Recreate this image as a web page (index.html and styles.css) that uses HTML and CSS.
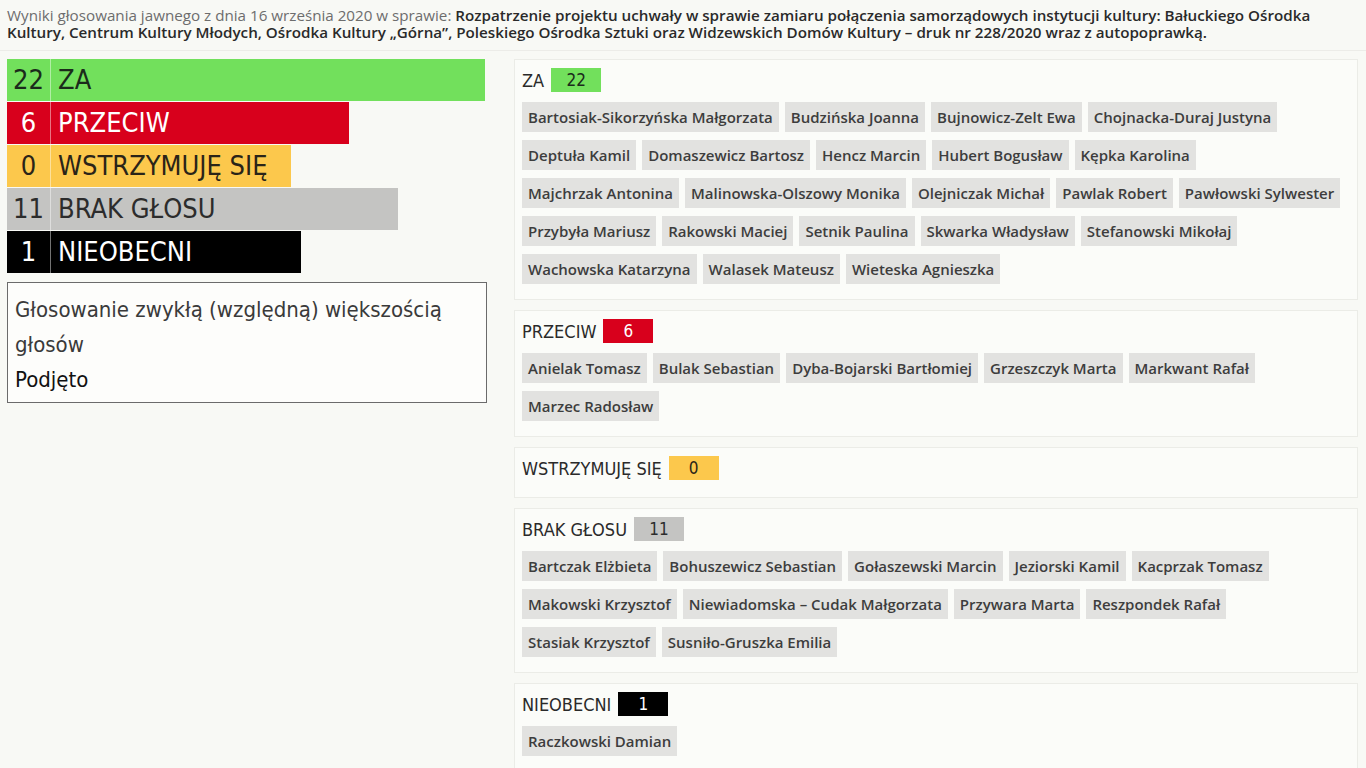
FILE: index.html
```html
<!DOCTYPE html>
<html lang="pl">
<head>
<meta charset="utf-8">
<title>Wyniki głosowania</title>
<link rel="stylesheet" href="styles.css">
</head>
<body>
<header class="top">
  <p class="title"><span class="muted">Wyniki głosowania jawnego z dnia 16 września 2020 w sprawie:</span> <span class="strong">Rozpatrzenie projektu uchwały w sprawie zamiaru połączenia samorządowych instytucji kultury: Bałuckiego Ośrodka Kultury, Centrum Kultury Młodych, Ośrodka Kultury „Górna”, Poleskiego Ośrodka Sztuki oraz Widzewskich Domów Kultury – druk nr 228/2020 wraz z autopoprawką.</span></p>
</header>
<main class="layout">
  <section class="left">
    <div class="bars">
      <div class="bar bar-za" style="width:478px"><span class="num">22</span><span class="lbl">ZA</span></div>
      <div class="bar bar-przeciw" style="width:342px"><span class="num">6</span><span class="lbl">PRZECIW</span></div>
      <div class="bar bar-wstrz" style="width:284px"><span class="num">0</span><span class="lbl">WSTRZYMUJĘ SIĘ</span></div>
      <div class="bar bar-brak" style="width:391px"><span class="num">11</span><span class="lbl">BRAK GŁOSU</span></div>
      <div class="bar bar-nieob" style="width:294px"><span class="num">1</span><span class="lbl">NIEOBECNI</span></div>
    </div>
    <div class="result">
      <p>Głosowanie zwykłą (względną) większością głosów</p>
      <p class="result-strong">Podjęto</p>
    </div>
  </section>
  <section class="right">
    <div class="panel">
      <div class="panel-head"><span class="panel-title">ZA</span><span class="badge badge-za">22</span></div>
      <ul class="chips">
        <li>Bartosiak-Sikorzyńska Małgorzata</li><li>Budzińska Joanna</li><li>Bujnowicz-Zelt Ewa</li><li>Chojnacka-Duraj Justyna</li>
        <li>Deptuła Kamil</li><li>Domaszewicz Bartosz</li><li>Hencz Marcin</li><li>Hubert Bogusław</li><li>Kępka Karolina</li>
        <li>Majchrzak Antonina</li><li>Malinowska-Olszowy Monika</li><li>Olejniczak Michał</li><li>Pawlak Robert</li><li>Pawłowski Sylwester</li>
        <li>Przybyła Mariusz</li><li>Rakowski Maciej</li><li>Setnik Paulina</li><li>Skwarka Władysław</li><li>Stefanowski Mikołaj</li>
        <li>Wachowska Katarzyna</li><li>Walasek Mateusz</li><li>Wieteska Agnieszka</li>
      </ul>
    </div>
    <div class="panel">
      <div class="panel-head"><span class="panel-title">PRZECIW</span><span class="badge badge-przeciw">6</span></div>
      <ul class="chips">
        <li>Anielak Tomasz</li><li>Bulak Sebastian</li><li>Dyba-Bojarski Bartłomiej</li><li>Grzeszczyk Marta</li><li>Markwant Rafał</li>
        <li>Marzec Radosław</li>
      </ul>
    </div>
    <div class="panel">
      <div class="panel-head"><span class="panel-title">WSTRZYMUJĘ SIĘ</span><span class="badge badge-wstrz">0</span></div>
      <ul class="chips"></ul>
    </div>
    <div class="panel">
      <div class="panel-head"><span class="panel-title">BRAK GŁOSU</span><span class="badge badge-brak">11</span></div>
      <ul class="chips">
        <li>Bartczak Elżbieta</li><li>Bohuszewicz Sebastian</li><li>Gołaszewski Marcin</li><li>Jeziorski Kamil</li><li>Kacprzak Tomasz</li>
        <li>Makowski Krzysztof</li><li>Niewiadomska – Cudak Małgorzata</li><li>Przywara Marta</li><li>Reszpondek Rafał</li>
        <li>Stasiak Krzysztof</li><li>Susniło-Gruszka Emilia</li>
      </ul>
    </div>
    <div class="panel">
      <div class="panel-head"><span class="panel-title">NIEOBECNI</span><span class="badge badge-nieob">1</span></div>
      <ul class="chips">
        <li>Raczkowski Damian</li>
      </ul>
    </div>
  </section>
</main>
</body>
</html>
```
FILE: styles.css
```css
* { box-sizing: border-box; }
html, body { margin: 0; padding: 0; }
body {
  background: #f8f9f5;
  font-family: "Open Sans", "DejaVu Sans", sans-serif;
  color: #333;
  overflow: hidden;
  height: 768px;
}
.top {
  padding: 7px 7px 0 7px;
  height: 51px;
  border-bottom: 1px solid #ecece8;
}
.title {
  margin: 0;
  font-size: 15.2px;
  line-height: 17px;
}
.muted { color: #6d6d6d; }
.strong { color: #2a2a2a; font-weight: 600; }

.layout {
  display: flex;
  padding: 8px 8px 0 7px;
  gap: 27px;
}
.left { width: 480px; flex: none; }
.right { flex: 1; display: flex; flex-direction: column; gap: 10px; }

.bars { display: flex; flex-direction: column; gap: 1px; }
.bar {
  display: flex;
  align-items: center;
  height: 42px;
  white-space: nowrap;
  font-family: "DejaVu Sans", sans-serif;
  font-stretch: condensed;
  font-size: 27px;
  color: #1b2b1b;
}
.bar .num {
  width: 44px;
  flex: none;
  text-align: center;
  height: 100%;
  line-height: 42px;
  border-right: 1px solid rgba(255,255,255,0.45);
}
.bar .lbl { padding-left: 7px; line-height: 42px; }
.bar-za { background: #72e05c; }
.bar-przeciw { background: #d8001c; color: #fff; }
.bar-wstrz { background: #fcc84c; color: #2a2418; }
.bar-brak { background: #c4c4c2; color: #2c2c2c; }
.bar-nieob { background: #000; color: #fff; }

.result {
  margin-top: 9px;
  width: 480px;
  border: 1px solid #6b6b6b;
  background: #fdfdfb;
  padding: 9px 7px 5px 7px;
  font-family: "DejaVu Sans", sans-serif;
  font-stretch: condensed;
  font-size: 22px;
  line-height: 35px;
  color: #3a3a3a;
}
.result p { margin: 0; }
.result-strong { color: #111; }

.panel {
  background: #fbfcf9;
  border: 1px solid #ebece7;
  padding: 8px 6px 7px 6px;
}
.panel-head {
  display: flex;
  align-items: center;
  height: 24px;
  margin-bottom: 10px;
}
.panel-title {
  font-family: "DejaVu Sans", sans-serif;
  font-stretch: condensed;
  font-size: 18px;
  white-space: nowrap;
  color: #2a2a2a;
  padding-left: 1px;
}
.badge {
  margin-left: 7px;
  width: 50px;
  height: 24px;
  line-height: 24px;
  text-align: center;
  font-family: "DejaVu Sans", sans-serif;
  font-stretch: condensed;
  font-size: 17px;
}
.badge-za { background: #72e05c; color: #1b2b1b; }
.badge-przeciw { background: #d8001c; color: #fff; }
.badge-wstrz { background: #fcc84c; color: #2a2418; }
.badge-brak { background: #c4c4c2; color: #2c2c2c; }
.badge-nieob { background: #000; color: #fff; }

.chips {
  list-style: none;
  margin: 0;
  padding: 0 0 0 1px;
  display: flex;
  flex-wrap: wrap;
  column-gap: 6px;
}
.chips li {
  background: #e2e2e0;
  height: 30px;
  line-height: 30px;
  padding: 0 6px;
  margin-bottom: 8px;
  font-size: 15px;
  font-weight: 600;
  color: #3d3d3d;
}
```
